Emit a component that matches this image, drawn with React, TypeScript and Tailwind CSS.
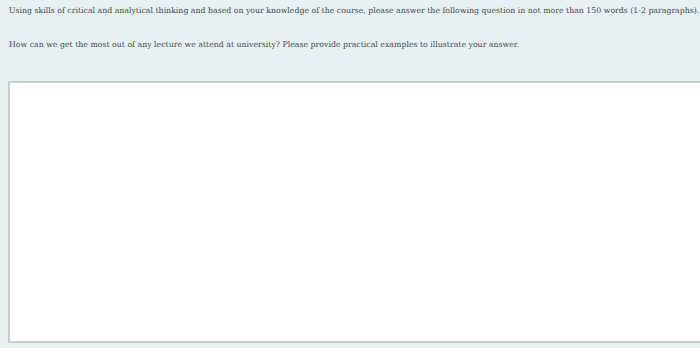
export default function App() {
  return (
    <div className="w-[700px] h-[348px] overflow-hidden bg-[#e7f1f3] text-[#464b4e]" style={{ fontFamily: '"DejaVu Serif", serif' }}>
      <div className="pl-[9px] pt-[6px]">
        <p className="text-[7.8px] leading-[10px] whitespace-nowrap">Using skills of critical and analytical thinking and based on your knowledge of the course, please answer the following question in not more than 150 words (1-2 paragraphs).</p>
        <p className="mt-[24px] text-[7.8px] leading-[10px] whitespace-nowrap">How can we get the most out of any lecture we attend at university? Please provide practical examples to illustrate your answer.</p>
      </div>
      <div className="ml-[8px] mt-[31px] w-[720px] h-[262px] bg-white border-2 border-[#c9cccd] border-r-0"></div>
    </div>
  );
}
